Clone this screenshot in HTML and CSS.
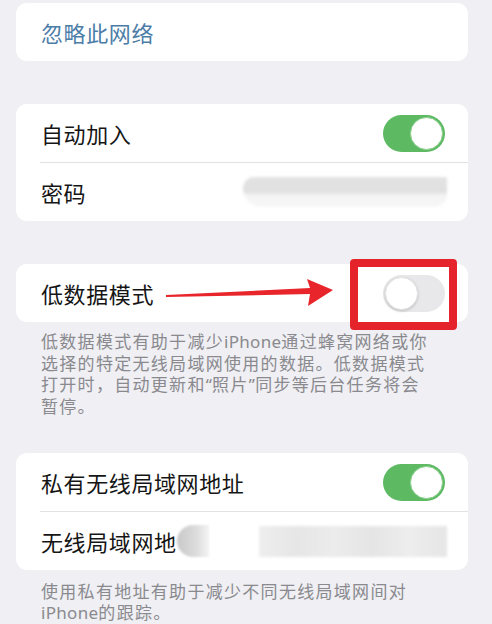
FILE: index.html
```html
<!DOCTYPE html>
<html lang="zh-CN">
<head>
<meta charset="utf-8">
<link rel="stylesheet" href="styles.css">
</head>
<body>
<div class="page">
  <div class="card">
    <div class="row"><span class="link">忽略此网络</span></div>
  </div>

  <div class="card gap">
    <div class="row"><span class="title">自动加入</span><span class="toggle on"><span class="knob"></span></span></div>
    <div class="row"><span class="title">密码</span><span class="pwblur"></span></div>
  </div>

  <div class="card gap">
    <div class="row"><span class="title">低数据模式</span><span class="toggle off"><span class="knob"></span></span></div>
  </div>
  <p class="note">低数据模式有助于减少<span class="lat">iPhone</span>通过蜂窝网络或你<br>选择的特定无线局域网使用的数据。低数据模式<br>打开时，自动更新和<span class="lat">“</span>照片<span class="lat">”</span>同步等后台任务将会<br>暂停。</p>

  <div class="card gap2">
    <div class="row"><span class="title">私有无线局域网地址</span><span class="toggle on"><span class="knob"></span></span></div>
    <div class="row addr"><span class="title">无线局域网地</span><span class="blob"></span><span class="macblur"></span></div>
  </div>
  <p class="note note2">使用私有地址有助于减少不同无线局域网间对<br><span class="lat">iPhone</span>的跟踪。</p>
</div>

<div class="redbox"></div>
<svg class="arrow" width="190" height="40" viewBox="0 0 190 40">
  <polygon points="6,20 150,13 147,4 173,15 148,31 150,19 6,22" fill="#e8252a"/>
</svg>
</body>
</html>
```

FILE: styles.css
```css
html, body {
  margin: 0;
  padding: 0;
}
body {
  background: #efeff4;
  font-family: "Noto Sans CJK SC", "Noto Sans", sans-serif;
  width: 492px;
  height: 624px;
  overflow: hidden;
  position: relative;
}
.page {
  padding: 3px 24px 0 16px;
}
.card {
  background: #fff;
  border-radius: 11px;
  padding-left: 24px;
}
.gap {
  margin-top: 43px;
}
.gap2 {
  margin-top: 37px;
}
.row {
  height: 58px;
  padding-left: 1px;
  padding-right: 23px;
  display: flex;
  align-items: center;
  justify-content: space-between;
}
.row + .row {
  border-top: 1px solid #e2e2e6;
}
.title {
  font-size: 22px;
  letter-spacing: 0.6px;
  color: #151515;
}
.link {
  font-size: 22px;
  letter-spacing: 0.6px;
  color: #4c7da8;
}
.toggle {
  width: 62px;
  height: 37px;
  border-radius: 19px;
  position: relative;
  flex: none;
}
.toggle.on {
  background: #5dba63;
}
.toggle.off {
  background: #e8e8ea;
}
.knob {
  position: absolute;
  top: 2px;
  width: 33px;
  height: 33px;
  border-radius: 50%;
  background: #fff;
  box-sizing: border-box;
}
.on .knob {
  right: 2px;
  border: 1px solid #8fcf8f;
}
.off .knob {
  left: 2px;
  box-shadow: 0 1px 3px rgba(0,0,0,0.18);
  border: 1px solid #e4e4e4;
}
.pwblur {
  width: 204px;
  height: 30px;
  margin-right: -2px;
  border-radius: 12px 2px 14px 20px;
  background: linear-gradient(#e2e2e2 0%, #e0e0e0 50%, #f3f3f3 60%, #f7f7f7 100%);
  filter: blur(1.5px);
}
.addr {
  justify-content: flex-start;
}
.blob {
  width: 32px;
  height: 32px;
  border-radius: 16px 0 0 16px;
  background: linear-gradient(90deg, #c9c9c9, #dcdcdc 60%, #f4f4f4);
  filter: blur(1px);
  flex: none;
}
.macblur {
  width: 188px;
  height: 31px;
  margin-left: auto;
  margin-right: -2px;
  background: linear-gradient(90deg, #eeeeee 0%, #e6e6e6 20%, #ececec 40%, #e5e5e5 60%, #ededed 80%, #e6e6e6 100%);
  filter: blur(1.5px);
  flex: none;
}
.note {
  margin: 8px 0 0 25px;
  font-size: 17px;
  line-height: 21px;
  letter-spacing: 1.3px;
  color: #8a8a8e;
  white-space: nowrap;
}
.lat {
  font-family: "Noto Sans", sans-serif;
  letter-spacing: 0.3px;
}
.note2 {
  margin-top: 10px;
}
.redbox {
  position: absolute;
  left: 350px;
  top: 259px;
  width: 107px;
  height: 71px;
  box-sizing: border-box;
  border: 8px solid #e5232a;
  border-radius: 4px;
}
.arrow {
  position: absolute;
  left: 160px;
  top: 275px;
}
```
